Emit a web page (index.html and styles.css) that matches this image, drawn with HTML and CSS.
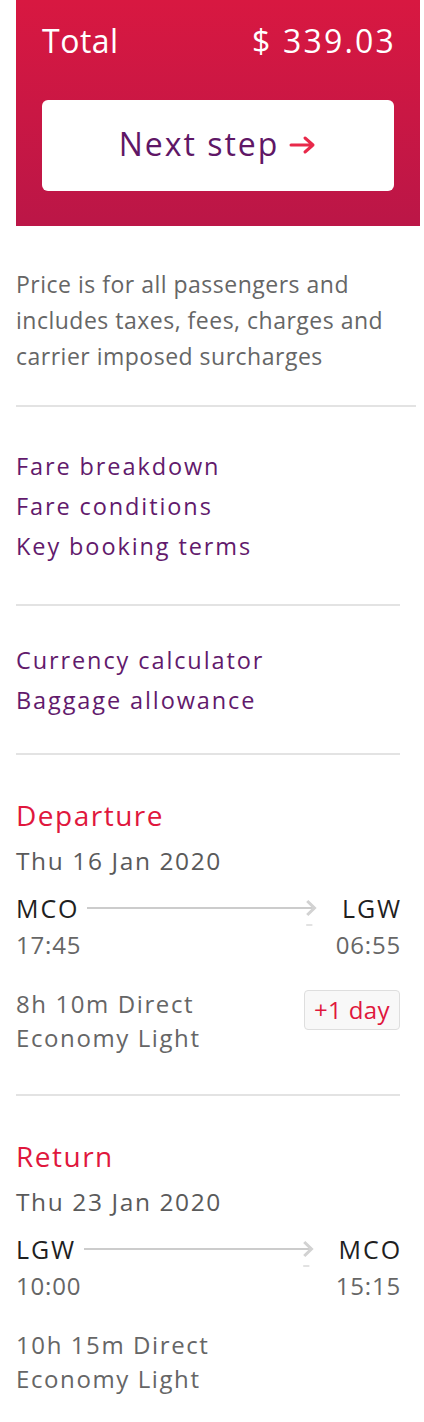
FILE: index.html
```html
<!DOCTYPE html>
<html>
<head>
<meta charset="utf-8">
<link rel="stylesheet" href="styles.css">
</head>
<body>
<div class="summary">
  <div class="total-row"><span class="total-label">Total</span><span class="total-value">$ 339.03</span></div>
  <button class="next"><span>Next step</span><svg class="next-arrow" width="28" height="20" viewBox="0 0 28 20"><path d="M2 10H24M16 3L24 10L16 17" fill="none" stroke="#e8294a" stroke-width="3" stroke-linecap="round" stroke-linejoin="round"/></svg></button>
</div>

<p class="note">Price is for all passengers and includes taxes, fees, charges and carrier imposed surcharges</p>
<hr class="div wide">

<div class="links first">
  <a>Fare breakdown</a>
  <a>Fare conditions</a>
  <a>Key booking terms</a>
</div>
<hr class="div">
<div class="links second">
  <a>Currency calculator</a>
  <a>Baggage allowance</a>
</div>
<hr class="div">

<section class="leg">
  <h2>Departure</h2>
  <div class="date">Thu 16 Jan 2020</div>
  <div class="route">
    <span class="code">MCO</span>
    <svg class="line" viewBox="0 0 226 36" preserveAspectRatio="none"><path d="M0 17H220" stroke="#cccccc" stroke-width="2"/><path d="M214 10L221 17L214 24" fill="none" stroke="#d2d2d2" stroke-width="3"/><path d="M213 34H219" stroke="#e2e2e2" stroke-width="2"/></svg>
    <span class="code end">LGW</span>
  </div>
  <div class="times"><span>17:45</span><span class="end">06:55</span></div>
  <div class="details">
    <div class="info">8h 10m Direct<br>Economy Light</div>
    <span class="badge">+1 day</span>
  </div>
</section>
<hr class="div">

<section class="leg">
  <h2>Return</h2>
  <div class="date">Thu 23 Jan 2020</div>
  <div class="route">
    <span class="code">LGW</span>
    <svg class="line" viewBox="0 0 226 36" preserveAspectRatio="none"><path d="M0 17H220" stroke="#cccccc" stroke-width="2"/><path d="M214 10L221 17L214 24" fill="none" stroke="#d2d2d2" stroke-width="3"/><path d="M213 34H219" stroke="#e2e2e2" stroke-width="2"/></svg>
    <span class="code end">MCO</span>
  </div>
  <div class="times"><span>10:00</span><span class="end">15:15</span></div>
  <div class="details">
    <div class="info">10h 15m Direct<br>Economy Light</div>
  </div>
</section>
</body>
</html>
```
FILE: styles.css
```css
* { box-sizing: border-box; }
body {
  margin: 0;
  font-family: "Open Sans", "Noto Sans", sans-serif;
  background: #fff;
  color: #666;
}
.summary {
  margin: 0 4px 0 16px;
  height: 226px;
  padding: 22px 26px 0 26px;
  background: linear-gradient(#d81841, #bb1647);
}
.total-row {
  display: flex;
  justify-content: space-between;
  color: #fff;
  font-size: 32px;
  line-height: 38px;
  font-weight: 500;
}
.total-label { letter-spacing: 0.5px; }
.total-value { letter-spacing: 2.2px; margin-right: -2px; }
.next {
  margin-top: 40px;
  width: 352px;
  height: 91px;
  border: none;
  border-radius: 6px;
  background: #fff;
  color: #5f1766;
  font-family: inherit;
  font-size: 32px;
  letter-spacing: 2px;
  display: flex;
  align-items: center;
  justify-content: center;
  gap: 10px;
  padding: 0 0 4px 0;
}
.next-arrow { margin-top: 2px; }
.note {
  margin: 40px 8px 0 16px;
  font-size: 23px;
  letter-spacing: 0.5px;
  line-height: 36px;
  color: #666;
}
.div {
  border: none;
  height: 2px;
  background: #e3e3e3;
  margin: 0 24px 0 16px;
}
.div.wide { margin: 31px 8px 0 16px; }
.links {
  display: flex;
  flex-direction: column;
  margin-left: 16px;
  font-size: 23.5px;
  letter-spacing: 1.9px;
  line-height: 40px;
  color: #621a6c;
}
.links.first { padding: 39px 0 38px; }
.links.second { padding: 34px 0 33px; }
.leg {
  margin: 0 24px 0 16px;
  padding: 43px 0 39px;
}
.leg h2 {
  margin: 0;
  font-weight: normal;
  font-size: 28px;
  letter-spacing: 1.5px;
  line-height: 34px;
  color: #e0173d;
}
.date {
  margin-top: 12px;
  font-size: 24.5px;
  letter-spacing: 1.6px;
  line-height: 34px;
  color: #5a5a5a;
}
.route {
  margin-top: 13px;
  display: flex;
  align-items: flex-start;
  font-size: 25px;
  letter-spacing: 1.9px;
  line-height: 34px;
  color: #1f1f1f;
}
.line {
  flex: 1;
  height: 36px;
  margin: 0 22px -2px 8px;
}
.end { margin-right: -2px; }
.times {
  margin-top: 3px;
  display: flex;
  justify-content: space-between;
  font-size: 24px;
  letter-spacing: 0.8px;
  line-height: 34px;
  color: #666;
}
.times .end { margin-right: -1px; }
.details {
  margin-top: 25px;
  display: flex;
  justify-content: space-between;
  align-items: flex-start;
}
.info {
  font-size: 24px;
  letter-spacing: 1.6px;
  line-height: 34px;
  color: #666;
}
.badge {
  margin-top: 3px;
  border: 1px solid #dedede;
  background: #f8f8f8;
  border-radius: 4px;
  height: 40px;
  padding: 0 9px;
  font-size: 24px;
  letter-spacing: 0.4px;
  line-height: 38px;
  color: #e0173d;
}
```
